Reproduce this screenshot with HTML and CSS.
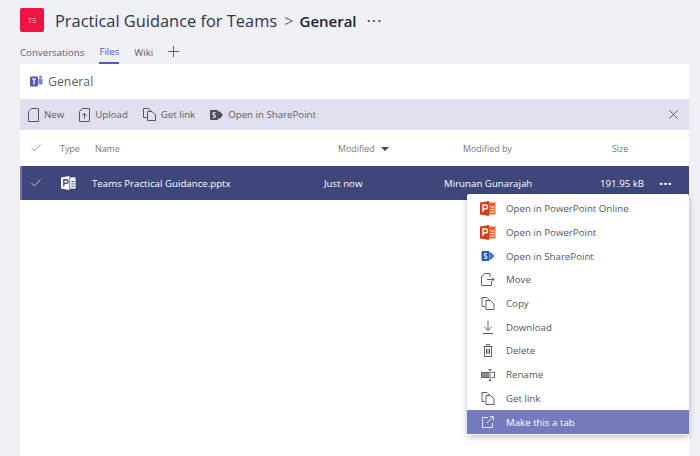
FILE: index.html
```html
<!DOCTYPE html>
<html lang="en">
<head>
    <meta charset="UTF-8">
    <title>Practical Guidance for Teams</title>
    <link rel="stylesheet" href="styles.css">
</head>
<body>
    <header class="top">
        <div class="avatar">TS</div>
        <h1 class="title">Practical Guidance for Teams<span class="sep">&gt;</span><b>General</b><span class="more">&middot;&middot;&middot;</span></h1>
    </header>
    <nav class="tabs">
        <a>Conversations</a>
        <a class="active">Files</a>
        <a>Wiki</a>
        <svg class="plus" width="11" height="11" viewBox="0 0 11 11"><path d="M5.5 0V11M0 5.5H11" stroke="#5f6068" fill="none"/></svg>
    </nav>
    <main class="panel">
        <div class="crumb">
            <svg width="13" height="13" viewBox="0 0 13 13"><rect x="0" y="1.5" width="8" height="10" rx="1" fill="#5558af"/><rect x="8.5" y="3.5" width="4" height="6" rx="1" fill="#7b83c9"/><circle cx="10.5" cy="2" r="1.4" fill="#7b83c9"/><path d="M2 4H6M4 4V9.5" stroke="#fff" stroke-width="1.2" fill="none"/></svg>
            <span>General</span>
        </div>
        <div class="toolbar">
            <span class="tool"><svg width="11" height="14" viewBox="0 0 11 14"><path d="M3.5 .5H10.5V13.5H.5V3.5Z" fill="none" stroke="#55565e"/></svg>New</span>
            <span class="tool"><svg width="11" height="14" viewBox="0 0 11 14"><path d="M3.5 .5H10.5V13.5H.5V3.5ZM5.5 10.5V5.5M3.5 7.5L5.5 5.5L7.5 7.5" fill="none" stroke="#55565e"/></svg>Upload</span>
            <span class="tool"><svg width="13" height="13" viewBox="0 0 13 13"><path d="M3.5 9.5H.5V.5H5.5L8 3M4.5 3.5H9L12.5 7V12.5H4.5Z" fill="none" stroke="#55565e"/></svg>Get link</span>
            <span class="tool"><svg width="13" height="12" viewBox="0 0 13 12"><path d="M8 2.5H10L13 6L10 9.5H8Z" fill="#4d4e58"/><rect x="0" y="1" width="8" height="10" rx="1" fill="#4d4e58"/><path d="M5.5 3.7H3V6H5.2V8.3H2.7" stroke="#fff" fill="none"/></svg>Open in SharePoint</span>
            <svg class="close" width="9" height="9" viewBox="0 0 9 9"><path d="M.5 .5L8.5 8.5M8.5 .5L.5 8.5" stroke="#55565e" fill="none"/></svg>
        </div>
        <div class="row head">
            <svg class="check" width="10" height="8" viewBox="0 0 10 8"><path d="M.5 4L3.5 7L9.5 .5" stroke="#9a9aa2" fill="none"/></svg>
            <span>Type</span>
            <span>Name</span>
            <span>Modified <svg width="8" height="4" viewBox="0 0 8 4"><path d="M0 0H8L4 4Z" fill="#44454d"/></svg></span>
            <span>Modified by</span>
            <span>Size</span>
        </div>
        <div class="row selected">
            <svg class="check" width="10" height="8" viewBox="0 0 10 8"><path d="M.5 4L3.5 7L9.5 .5" stroke="#c5c7e0" fill="none"/></svg>
            <svg class="file" width="15" height="14" viewBox="0 0 16 15"><path d="M0 1.5L9 0V15L0 13.5Z" fill="#fff"/><rect x="9.8" y="1.5" width="5.7" height="12" fill="#fff"/><path d="M3 11V4H5.5A1.7 1.7 0 0 1 5.5 8H3" stroke="#3f4679" stroke-width="1.4" fill="none"/><path d="M11 6H14.5M11 8.5H14.5M11 11H14.5" stroke="#3f4679"/></svg>
            <span>Teams Practical Guidance.pptx</span>
            <span>Just now</span>
            <span>Mirunan Gunarajah</span>
            <span>191.95 kB</span>
            <span class="dots">&middot;&middot;&middot;</span>
        </div>
    </main>
    <ul class="menu">
        <li><svg width="16" height="15" viewBox="0 0 16 15"><use href="#ppt"/></svg>Open in PowerPoint Online</li>
        <li><svg width="16" height="15" viewBox="0 0 16 15"><use href="#ppt"/></svg>Open in PowerPoint</li>
        <li><svg width="14" height="12" viewBox="0 0 13 12"><path d="M8 2.5H10L13 6L10 9.5H8Z" fill="#4a7bd0"/><rect x="0" y="1" width="8" height="10" rx="1" fill="#2f5cb8"/><path d="M5.5 3.7H3V6H5.2V8.3H2.7" stroke="#fff" fill="none"/></svg>Open in SharePoint</li>
        <li><svg width="14" height="13" viewBox="0 0 14 13"><path d="M1 12.5A.5.5 0 0 1 .5 12V4L3.5 .5H9V4M10.5 8V12.5H1M6 6.5H13M11 4.5L13 6.5L11 8.5" fill="none" stroke="#5f6068"/></svg>Move</li>
        <li><svg width="13" height="13" viewBox="0 0 13 13"><path d="M3.5 9.5H.5V.5H5.5L8 3M4.5 3.5H9L12.5 7V12.5H4.5Z" fill="none" stroke="#5f6068"/></svg>Copy</li>
        <li><svg width="11" height="13" viewBox="0 0 11 13"><path d="M5.5 0V9.5M2 6L5.5 9.5L9 6M.5 12.5H10.5" fill="none" stroke="#5f6068"/></svg>Download</li>
        <li><svg width="10" height="13" viewBox="0 0 10 13"><path d="M.5 2.5H9.5M3.5 2.5V.5H6.5V2.5M1.5 2.5V12.5H8.5V2.5M3.5 5V10M5 5V10M6.5 5V10" fill="none" stroke="#5f6068"/></svg>Delete</li>
        <li><svg width="14" height="12" viewBox="0 0 14 12"><path d="M8 3.5H.5V8.5H8" fill="#8a8b92" stroke="#5f6068"/><path d="M9 .5V11.5M7.5 .5H10.5M7.5 11.5H10.5M10.5 3.5H13.5V8.5H10.5" fill="none" stroke="#5f6068"/></svg>Rename</li>
        <li><svg width="13" height="13" viewBox="0 0 13 13"><path d="M3.5 9.5H.5V.5H5.5L8 3M4.5 3.5H9L12.5 7V12.5H4.5Z" fill="none" stroke="#5f6068"/></svg>Get link</li>
        <li class="hover"><svg width="12" height="12" viewBox="0 0 12 12"><path d="M6 1.5H.5V11.5H10.5V7M5 7L11 1M7.5 .5H11.5V4.5" fill="none" stroke="#e3e4f3"/></svg>Make this a tab</li>
    </ul>
    <svg class="defs" width="0" height="0"><defs><g id="ppt"><path d="M0 1.5L9 0V15L0 13.5Z" fill="#d2401f"/><rect x="9" y="1.5" width="6.5" height="12" fill="#e8653a"/><path d="M3 11V4H5.5A1.7 1.7 0 0 1 5.5 8H3" stroke="#fff" stroke-width="1.4" fill="none"/><path d="M10.5 6H14.5M10.5 8.5H14.5M10.5 11H14.5" stroke="#fff"/></g></defs></svg>
</body>
</html>
```

FILE: styles.css
```css
body{
    margin: 0px;
    height: 456px;
    overflow: hidden;
    position: relative;
    background-color: #eef0f6;
    font-family: "Open Sans", "Noto Sans", sans-serif;
    color: #5f6068;
}
.top{
    display: flex;
    align-items: center;
    gap: 11px;
    padding: 8px 20px 0px;
    height: 24px;
}
.avatar{
    width: 24px;
    height: 24px;
    border-radius: 2px;
    background-color: #ed1443;
    color: #f9c6d2;
    font-size: 7.5px;
    display: flex;
    align-items: center;
    justify-content: center;
}
.title{
    margin: 0px;
    font-size: 16.4px;
    font-weight: 400;
    color: #33344a;
    white-space: nowrap;
}
.title b{
    font-size: 15px;
    font-weight: 600;
    color: #1f2030;
}
.sep{
    margin: 0px 6px 0px 7px;
    color: #6b6c78;
}
.more{
    margin-left: 10px;
    letter-spacing: 1px;
}
.tabs{
    display: flex;
    align-items: center;
    gap: 15px;
    height: 32px;
    padding-left: 20px;
    font-size: 9.7px;
}
.tabs a{
    height: 21px;
    line-height: 22px;
    margin-top: 9px;
}
.tabs .active{
    color: #5558af;
    border-bottom: 2px solid #5558af;
}
.plus{
    margin: 6px 0px 0px 0px;
}
.panel{
    margin: 0px 11px 0px 20px;
    height: 392px;
    background-color: white;
}
.crumb{
    display: flex;
    align-items: center;
    gap: 5px;
    height: 35px;
    padding-left: 10px;
    font-size: 12.3px;
}
.toolbar{
    display: flex;
    align-items: center;
    gap: 15px;
    height: 31px;
    padding-left: 8px;
    background-color: #dfdfef;
    font-size: 9.7px;
}
.tool{
    display: flex;
    align-items: center;
    gap: 5px;
}
.close{
    margin-left: auto;
    margin-right: 11px;
}
.row{
    display: grid;
    align-items: center;
}
.check{
    margin-left: 11px;
}
.head{
    grid-template-columns: 40px 35px 243px 125px 149px 1fr;
    height: 36px;
    font-size: 8.9px;
    color: #77787f;
}
.head span svg{
    margin-left: 4px;
    vertical-align: 1px;
}
.selected{
    grid-template-columns: 38px 32px 232px 120px 156px 59px 1fr;
    height: 34px;
    box-sizing: border-box;
    background-color: #3f4679;
    border-left: 2px solid #6e74b8;
    color: white;
    font-size: 9.7px;
    font-weight: 500;
}
.selected .check{
    margin-left: 9px;
}
.file{
    margin-left: 1px;
}
.dots{
    font-size: 15px;
    font-weight: 700;
}
.menu{
    position: absolute;
    left: 467px;
    top: 194px;
    width: 222px;
    margin: 0px;
    padding: 3px 0px 1px;
    list-style: none;
    background-color: white;
    border-radius: 2px;
    box-shadow: 0px 2px 6px rgba(0, 0, 0, 0.25);
    font-size: 9.7px;
}
.menu li{
    display: flex;
    align-items: center;
    height: 23.7px;
    padding-left: 13px;
    color: #55565e;
}
.menu li svg{
    width: 16px;
    margin-right: 10px;
    flex: none;
}
.menu .hover{
    background-color: #7579bd;
    color: white;
}
.defs{
    position: absolute;
}
```
